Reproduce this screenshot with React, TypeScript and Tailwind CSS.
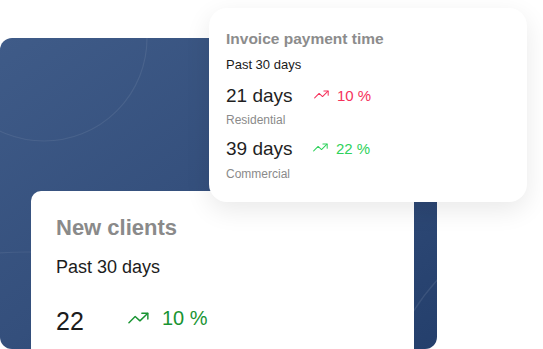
import React from "react";

function Trend({ className, w, h }: { className: string; w: number; h: number }) {
  return (
    <svg width={w} height={h} viewBox="0 0 22 12" fill="none" className={className}>
      <polyline points="1,11 7.5,4.5 12.5,9 20.5,1.2" stroke="currentColor" strokeWidth="1.5" strokeLinecap="round" strokeLinejoin="round" />
      <polyline points="14.5,1 20.8,1 20.8,7" stroke="currentColor" strokeWidth="1.5" strokeLinecap="round" strokeLinejoin="round" />
    </svg>
  );
}

export default function App() {
  return (
    <div
      className="relative w-[543px] h-[349px] overflow-hidden bg-white"
      style={{ fontFamily: '"Liberation Sans", Arial, sans-serif' }}
    >
      {/* Blue panel */}
      <div className="relative mt-[38px] w-[437px] h-[311px] rounded-[12px] overflow-hidden bg-linear-to-br from-[#3f5b88] via-[#344f7c] to-[#243f6c] pl-[31px] pt-[153px]">
        <svg className="absolute inset-0" width="437" height="311" viewBox="0 0 437 311" fill="none">
          <circle cx="44" cy="0" r="103" stroke="rgba(255,255,255,0.08)" strokeWidth="1.2" />
          <circle cx="27" cy="600" r="386" stroke="rgba(255,255,255,0.07)" strokeWidth="1.2" />
          <circle cx="600" cy="390" r="220" stroke="rgba(255,255,255,0.09)" strokeWidth="1.2" />
        </svg>

        {/* New clients card */}
        <div className="relative w-[383px] h-[180px] bg-white rounded-[10px] pl-[25px] pt-[23px]">
          <div className="text-[22px] leading-[28px] font-bold text-[#8a8a8a]">New clients</div>
          <div className="mt-[12.5px] text-[18px] leading-[24px] text-[#1c1c1c]">Past 30 days</div>
          <div className="mt-[26px] flex items-start">
            <div className="text-[25px] leading-[32px] text-[#1c1c1c] w-[72px]">22</div>
            <Trend className="text-[#199432] mt-[7px]" w={21} h={12} />
            <div className="ml-[13px] text-[20px] leading-[26px] text-[#199432]">10 %</div>
          </div>
        </div>
      </div>

      {/* Invoice payment time card */}
      <div className="absolute left-[209px] top-[8px] w-[318px] h-[194px] bg-white rounded-[18px] shadow-[0_8px_26px_rgba(0,0,0,0.09)] pl-[17px] pt-[21px]">
        <div className="text-[15.5px] leading-[20px] font-bold text-[#8c8c8c]">Invoice payment time</div>
        <div className="mt-[8px] text-[13px] leading-[16px] text-[#1a1a1a]">Past 30 days</div>

        <div className="mt-[10.5px] flex items-center h-[24px]">
          <div className="text-[19px] leading-[24px] text-[#1f1f1f] w-[88px]">21 days</div>
          <Trend className="text-[#f5315b] -mt-[3px]" w={15} h={9} />
          <div className="ml-[8px] text-[15px] leading-[20px] text-[#f5315b]">10 %</div>
        </div>
        <div className="mt-[4px] text-[12px] leading-[16px] text-[#8a8a8a]">Residential</div>

        <div className="mt-[9.5px] flex items-center h-[24px]">
          <div className="text-[19px] leading-[24px] text-[#1f1f1f] w-[87px]">39 days</div>
          <Trend className="text-[#2fd25c] -mt-[3px]" w={15} h={9} />
          <div className="ml-[8px] text-[15px] leading-[20px] text-[#2fd25c]">22 %</div>
        </div>
        <div className="mt-[4.5px] text-[12px] leading-[16px] text-[#8a8a8a]">Commercial</div>
      </div>
    </div>
  );
}
